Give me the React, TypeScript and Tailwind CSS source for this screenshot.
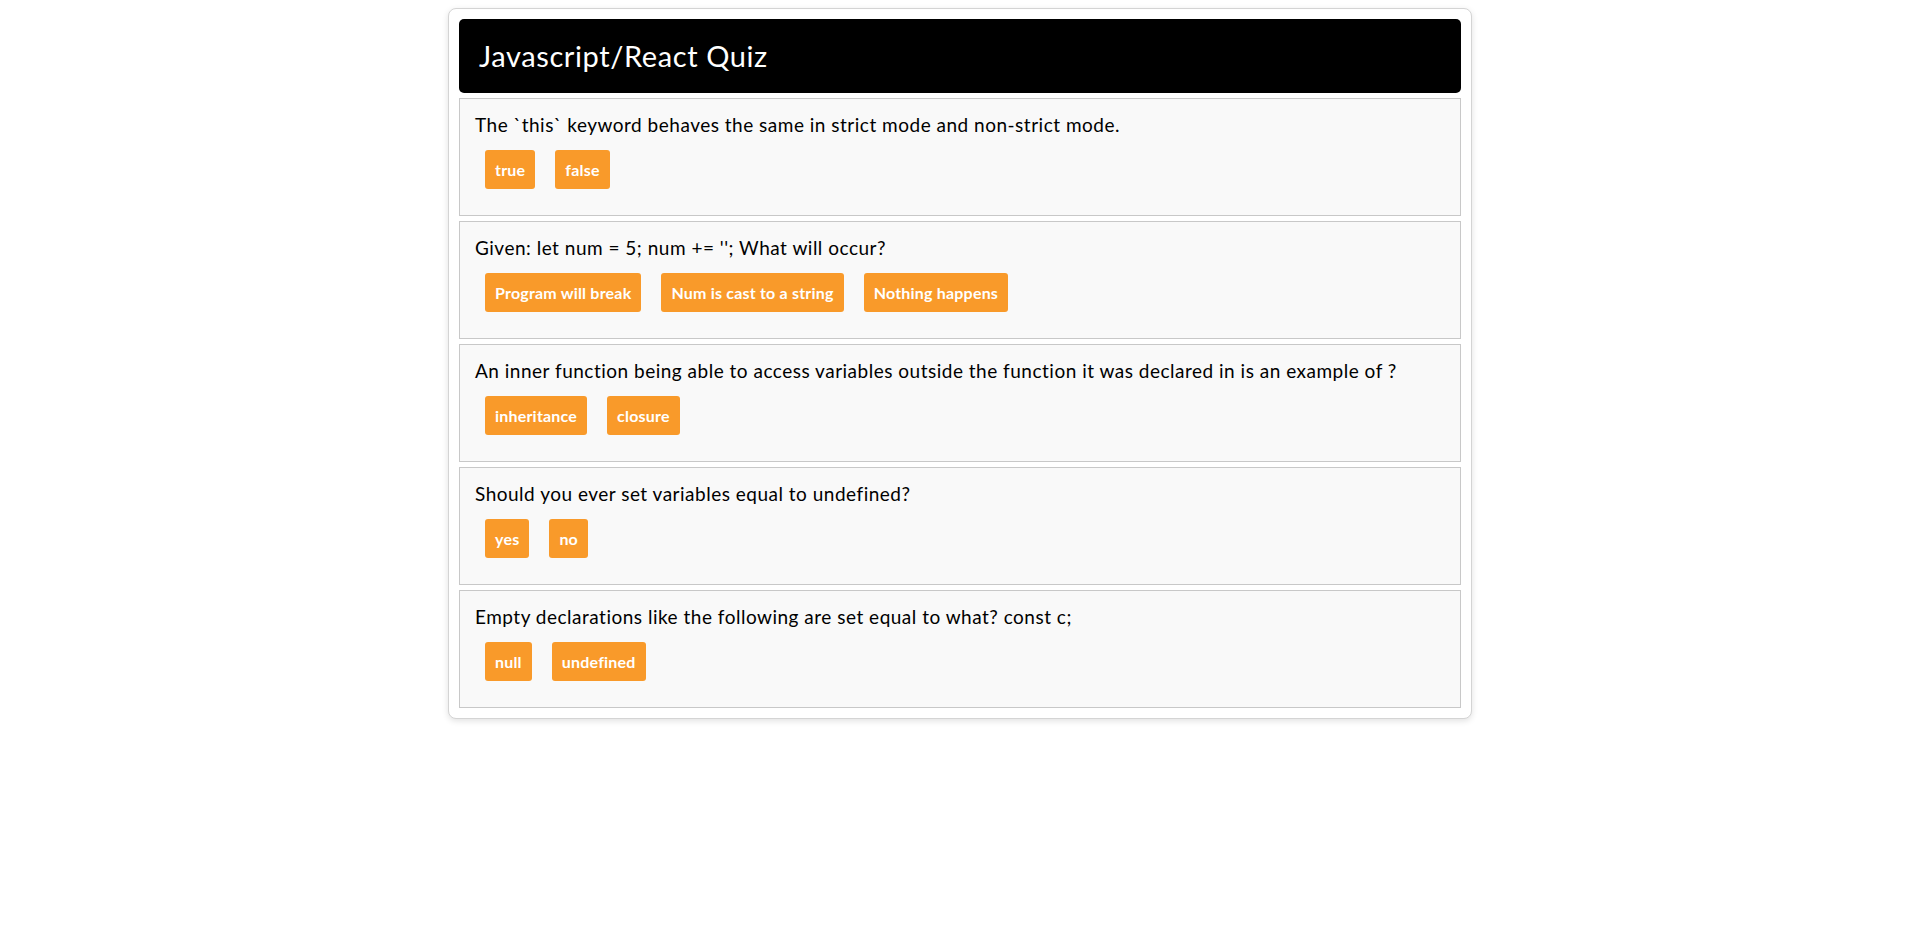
import React from 'react';

const questions = [
  {
    q: 'The `this` keyword behaves the same in strict mode and non-strict mode.',
    answers: ['true', 'false'],
  },
  {
    q: "Given: let num = 5; num += ''; What will occur?",
    answers: ['Program will break', 'Num is cast to a string', 'Nothing happens'],
  },
  {
    q: 'An inner function being able to access variables outside the function it was declared in is an example of ?',
    answers: ['inheritance', 'closure'],
  },
  {
    q: 'Should you ever set variables equal to undefined?',
    answers: ['yes', 'no'],
  },
  {
    q: 'Empty declarations like the following are set equal to what? const c;',
    answers: ['null', 'undefined'],
  },
];

const Question = ({ q, answers }: { q: string; answers: string[] }) => {
  return (
    <div className="border border-[#c8c8c8] bg-[#f9f9f9] pl-[15px] pr-4 pt-[13px] pb-[26px]">
      <p className="text-[19px] leading-[25px] tracking-[0.5px] text-black">{q}</p>
      <div className="mt-[13px] flex gap-[20px] pl-[10px]">
        {answers.map((a) => (
          <button
            key={a}
            className="h-[39px] rounded-[3px] bg-[#f99a2a] px-[10px] text-[16px] font-bold tracking-[0.2px] text-white"
          >
            {a}
          </button>
        ))}
      </div>
    </div>
  );
};

const App = () => {
  return (
    <div className="min-h-[937px] w-full bg-white pt-[8px] font-['Lato','Open_Sans',sans-serif]">
      <div className="mx-auto w-[1024px] rounded-[8px] border border-[#d4d4d4] bg-white p-[10px] shadow-[0_2px_6px_rgba(0,0,0,0.12)]">
        {/* Header */}
        <div className="flex h-[74px] items-center rounded-[5px] bg-black px-[20px]">
          <h1 className="text-[29px] font-normal tracking-[0.6px] text-white">Javascript/React Quiz</h1>
        </div>

        {/* Questions */}
        <div className="mt-[5px] flex flex-col gap-[5px]">
          {questions.map((item) => (
            <Question key={item.q} q={item.q} answers={item.answers} />
          ))}
        </div>
      </div>
    </div>
  );
};

export default App;
